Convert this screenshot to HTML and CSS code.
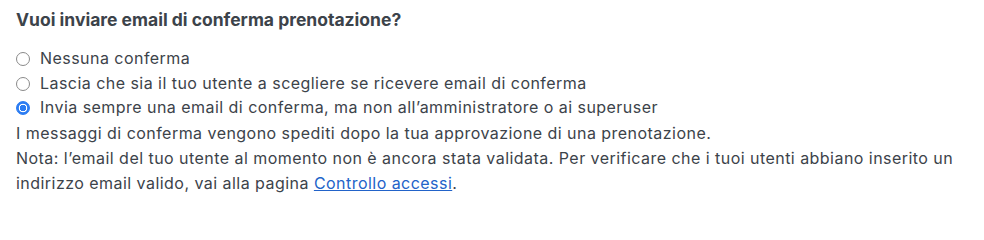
FILE: index.html
```html
<!DOCTYPE html>
<html lang="it">
<head>
<meta charset="utf-8">
<title>Conferma prenotazione</title>
<link rel="stylesheet" href="styles.css">
</head>
<body>
<div class="setting">
  <h3 class="setting-title">Vuoi inviare email di conferma prenotazione?</h3>
  <ul class="options">
    <li class="option"><label><input type="radio" name="conf" class="radio"><span>Nessuna conferma</span></label></li>
    <li class="option"><label><input type="radio" name="conf" class="radio"><span>Lascia che sia il tuo utente a scegliere se ricevere email di conferma</span></label></li>
    <li class="option"><label><input type="radio" name="conf" class="radio" checked><span>Invia sempre una email di conferma, ma non all’amministratore o ai superuser</span></label></li>
  </ul>
  <p class="help">I messaggi di conferma vengono spediti dopo la tua approvazione di una prenotazione.</p>
  <p class="help">Nota: l’email del tuo utente al momento non è ancora stata validata. Per verificare che i tuoi utenti abbiano inserito un indirizzo email valido, vai alla pagina <a href="#" class="link">Controllo accessi</a>.</p>
</div>
</body>
</html>
```
FILE: styles.css
```css
html, body {
  margin: 0;
  padding: 0;
  background: #ffffff;
}
body {
  font-family: Inter, "Noto Sans", "Liberation Sans", sans-serif;
  font-size: 16px;
  letter-spacing: 0.46px;
  color: #3c434a;
}
.setting {
  padding: 8px 10px 0 16px;
}
.setting-title {
  margin: 0 0 14px;
  font-size: 17.5px;
  font-weight: 700;
  letter-spacing: 0;
  line-height: 24px;
  color: #3c434a;
}
.options {
  list-style: none;
  margin: 0;
  padding: 0;
}
.option {
  line-height: 24.5px;
}
.option label {
  display: flex;
  align-items: center;
  gap: 10px;
}
.radio {
  appearance: none;
  -webkit-appearance: none;
  margin: 2px 0 0 0;
  width: 14px;
  height: 14px;
  border: 1px solid #8a8a8a;
  border-radius: 50%;
  background: #fff;
  flex: none;
  box-sizing: border-box;
}
.radio:checked {
  border: 1.5px solid #2b7cf2;
  background: radial-gradient(circle, #2b7cf2 0 3px, #ffffff 3.5px 4px, #2b7cf2 4.6px);
}
.help {
  margin: 0;
  line-height: 25px;
}
.help:first-of-type {
  margin-top: 1px;
}
.link {
  color: #2263c9;
  text-decoration: underline;
}
```
